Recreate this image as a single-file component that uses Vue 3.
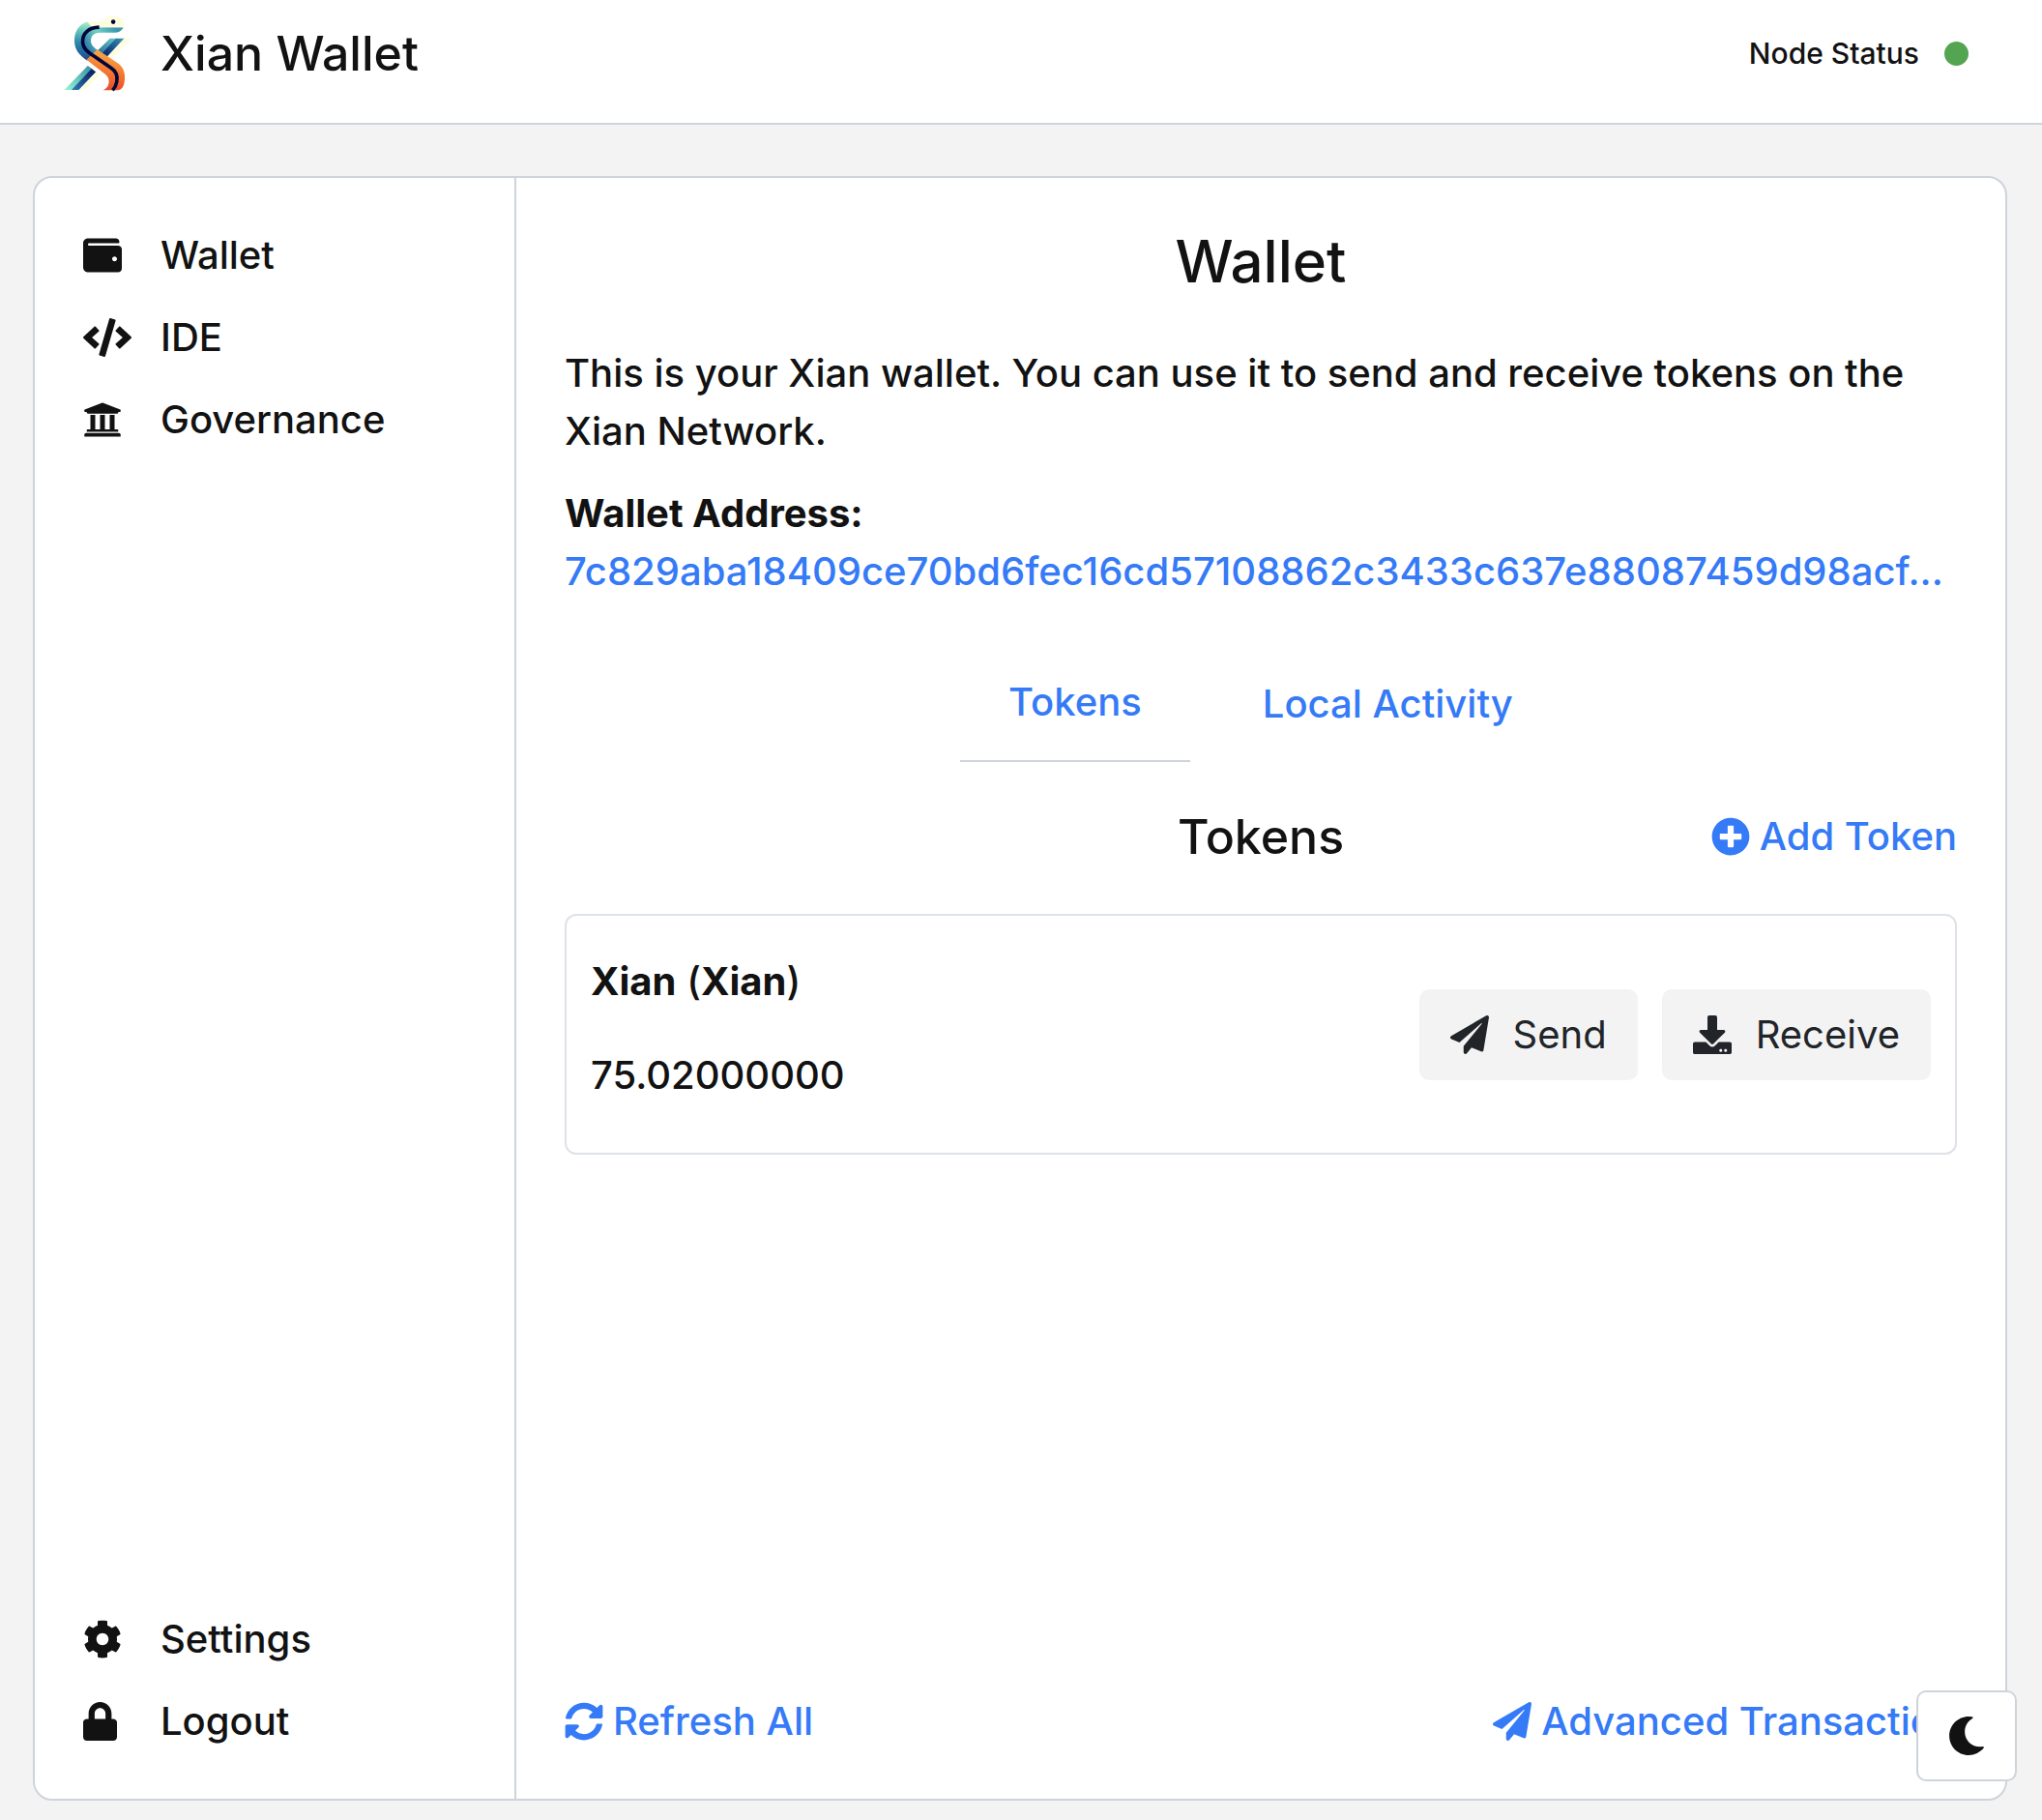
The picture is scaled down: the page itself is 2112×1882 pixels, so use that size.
<script setup>
import { ref } from 'vue'

const icons = {
  wallet: { w: 512, d: 'M461.2 128H80c-8.84 0-16-7.16-16-16s7.16-16 16-16h384c8.84 0 16-7.16 16-16 0-26.51-21.49-48-48-48H64C28.65 32 0 60.65 0 96v320c0 35.35 28.65 64 64 64h397.2c28.02 0 50.8-21.53 50.8-48V176c0-26.47-22.78-48-50.8-48zM416 336c-17.67 0-32-14.33-32-32s14.33-32 32-32 32 14.33 32 32-14.33 32-32 32z' },
  code: { w: 640, d: 'M278.9 511.5l-61-17.7c-6.4-1.8-10-8.5-8.2-14.9L346.2 8.7c1.8-6.4 8.5-10 14.9-8.2l61 17.7c6.4 1.8 10 8.5 8.2 14.9L293.8 503.3c-1.9 6.4-8.5 10.1-14.9 8.2zm-114-112.2l43.5-46.4c4.6-4.9 4.3-12.7-.8-17.2L117 256l90.6-79.7c5.1-4.5 5.5-12.3.8-17.2l-43.5-46.4c-4.5-4.8-12.1-5.1-17-.5L3.8 247.2c-5.1 4.7-5.1 12.8 0 17.5l144.1 135.1c4.9 4.6 12.5 4.4 17-.5zm327.2.6l144.1-135.1c5.1-4.7 5.1-12.8 0-17.5L492.1 112.1c-4.8-4.5-12.4-4.3-17 .5L431.6 159c-4.6 4.9-4.3 12.7.8 17.2L523 256l-90.6 79.7c-5.1 4.5-5.5 12.3-.8 17.2l43.5 46.4c4.5 4.9 12.1 5.1 17 .6z' },
  bank: { w: 512, d: 'M496 128v16a8 8 0 0 1-8 8h-24v12c0 6.627-5.373 12-12 12H60c-6.627 0-12-5.373-12-12v-12H24a8 8 0 0 1-8-8v-16a8 8 0 0 1 4.941-7.392l232-88a7.996 7.996 0 0 1 6.118 0l232 88A8 8 0 0 1 496 128zm-24 304H40c-13.255 0-24 10.745-24 24v16a8 8 0 0 0 8 8h464a8 8 0 0 0 8-8v-16c0-13.255-10.745-24-24-24zM96 192v192H60c-6.627 0-12 5.373-12 12v20h416v-20c0-6.627-5.373-12-12-12h-36V192h-64v192h-64V192h-64v192h-64V192H96z' },
  cog: { w: 512, d: 'M487.4 315.7l-42.6-24.6c4.3-23.2 4.3-47 0-70.2l42.6-24.6c4.9-2.8 7.1-8.6 5.5-14-11.1-35.6-30-67.8-54.7-94.6-3.8-4.1-10-5.1-14.8-2.3L380.8 110c-17.9-15.4-38.5-27.3-60.8-35.1V25.8c0-5.6-3.9-10.5-9.4-11.7-36.7-8.2-74.3-7.8-109.2 0-5.5 1.2-9.4 6.1-9.4 11.7V75c-22.2 7.9-42.8 19.8-60.8 35.1L88.7 85.5c-4.9-2.8-11-1.9-14.8 2.3-24.7 26.7-43.6 58.9-54.7 94.6-1.7 5.4.6 11.2 5.5 14L67.3 221c-4.3 23.2-4.3 47 0 70.2l-42.6 24.6c-4.9 2.8-7.1 8.6-5.5 14 11.1 35.6 30 67.8 54.7 94.6 3.8 4.1 10 5.1 14.8 2.3l42.6-24.6c17.9 15.4 38.5 27.3 60.8 35.1v49.2c0 5.6 3.9 10.5 9.4 11.7 36.7 8.2 74.3 7.8 109.2 0 5.5-1.2 9.4-6.1 9.4-11.7v-49.2c22.2-7.9 42.8-19.8 60.8-35.1l42.6 24.6c4.9 2.8 11 1.9 14.8-2.3 24.7-26.7 43.6-58.9 54.7-94.6 1.5-5.5-.7-11.3-5.6-14.1zM256 336c-44.1 0-80-35.9-80-80s35.9-80 80-80 80 35.9 80 80-35.9 80-80 80z' },
  lock: { w: 448, d: 'M400 224h-24v-72C376 68.2 307.8 0 224 0S72 68.2 72 152v72H48c-26.5 0-48 21.5-48 48v192c0 26.5 21.5 48 48 48h352c26.5 0 48-21.5 48-48V272c0-26.5-21.5-48-48-48zm-104 0H152v-72c0-39.7 32.3-72 72-72s72 32.3 72 72v72z' },
  plus: { w: 512, d: 'M256 8C119 8 8 119 8 256s111 248 248 248 248-111 248-248S393 8 256 8zm144 276c0 6.6-5.4 12-12 12h-92v92c0 6.6-5.4 12-12 12h-56c-6.6 0-12-5.4-12-12v-92h-92c-6.6 0-12-5.4-12-12v-56c0-6.6 5.4-12 12-12h92v-92c0-6.6 5.4-12 12-12h56c6.6 0 12 5.4 12 12v92h92c6.6 0 12 5.4 12 12v56z' },
  plane: { w: 512, d: 'M476 3.2L12.5 270.6c-18.1 10.4-15.8 35.6 2.2 43.2L121 358.4l287.3-253.2c5.5-4.9 13.3 2.6 8.6 8.3L176 407v80.5c0 23.6 28.5 32.9 42.5 15.8L282 426l124.6 52.2c14.2 6 30.4-2.9 33-18.2l72-432C515 7.8 493.3-6.8 476 3.2z' },
  download: { w: 512, d: 'M216 0h80c13.3 0 24 10.7 24 24v168h87.7c17.8 0 26.7 21.5 14.1 34.1L269.7 378.3c-7.5 7.5-19.8 7.5-27.3 0L90.1 226.1c-12.6-12.6-3.7-34.1 14.1-34.1H192V24c0-13.3 10.7-24 24-24zm296 376v112c0 13.3-10.7 24-24 24H24c-13.3 0-24-10.7-24-24V376c0-13.3 10.7-24 24-24h146.7l49 49c20.1 20.1 52.5 20.1 72.6 0l49-49H488c13.3 0 24 10.7 24 24zm-124 88c0-11-9-20-20-20s-20 9-20 20 9 20 20 20 20-9 20-20zm64 0c0-11-9-20-20-20s-20 9-20 20 9 20 20 20 20-9 20-20z' },
  sync: { w: 512, d: 'M370.72 133.28C339.458 104.008 298.888 87.962 255.848 88c-77.458.068-144.328 53.178-162.791 126.85-1.344 5.363-6.122 9.15-11.651 9.15H24.103c-7.498 0-13.194-6.807-11.807-14.176C33.933 94.924 134.813 8 256 8c66.448 0 126.791 26.136 171.315 68.685L463.03 40.97C478.149 25.851 504 36.559 504 57.941V192c0 13.255-10.745 24-24 24H345.941c-21.382 0-32.09-25.851-16.971-40.971l41.75-41.749zM32 296h134.059c21.382 0 32.09 25.851 16.971 40.971l-41.75 41.75c31.262 29.273 71.835 45.319 114.876 45.28 77.418-.07 144.315-53.144 162.787-126.849 1.344-5.363 6.122-9.15 11.651-9.15h57.304c7.498 0 13.194 6.807 11.807 14.176C478.067 417.076 377.187 504 256 504c-66.448 0-126.791-26.136-171.315-68.685L48.97 471.03C33.851 486.149 8 475.441 8 454.059V320c0-13.255 10.745-24 24-24z' },
  moon: { w: 512, d: 'M283.211 512c78.962 0 151.079-35.925 198.857-94.792 7.068-8.708-.639-21.43-11.562-19.35-124.203 23.654-238.262-71.576-238.262-196.954 0-72.222 38.662-138.635 101.498-174.394 9.686-5.512 7.25-20.197-3.756-22.23A258.156 258.156 0 0 0 283.211 0c-141.309 0-256 114.511-256 256 0 141.309 114.511 256 256 256z' },
}

const mainLinks = [
  { label: 'Wallet', icon: icons.wallet },
  { label: 'IDE', icon: icons.code },
  { label: 'Governance', icon: icons.bank },
]
const accountLinks = [
  { label: 'Settings', icon: icons.cog },
  { label: 'Logout', icon: icons.lock },
]

const tabs = ['Tokens', 'Local Activity']
const activeTab = ref('Tokens')

const address = '7c829aba18409ce70bd6fec16cd57108862c3433c637e88087459d98acf...'
const tokens = [{ name: 'Xian', symbol: 'Xian', balance: '75.02000000' }]
</script>

<template>
  <div class="page">
    <header class="topbar">
      <div class="brand">
        <svg class="logo" viewBox="75 45 216 243" aria-hidden="true">
          <defs>
            <linearGradient id="ribbon" gradientUnits="userSpaceOnUse" x1="90" y1="280" x2="180" y2="200">
              <stop offset="0" stop-color="#8df0cf" />
              <stop offset="1" stop-color="#2a7f9e" />
            </linearGradient>
            <linearGradient id="ribbonTop" gradientUnits="userSpaceOnUse" x1="190" y1="165" x2="250" y2="115">
              <stop offset="0" stop-color="#2d76a0" />
              <stop offset="1" stop-color="#74d8c8" />
            </linearGradient>
            <linearGradient id="navy" gradientUnits="userSpaceOnUse" x1="110" y1="280" x2="260" y2="120">
              <stop offset="0" stop-color="#2c74ac" />
              <stop offset="0.35" stop-color="#0a2668" />
              <stop offset="0.7" stop-color="#0d3478" />
              <stop offset="1" stop-color="#3a8fb4" />
            </linearGradient>
            <linearGradient id="neck" gradientUnits="userSpaceOnUse" x1="150" y1="60" x2="135" y2="185">
              <stop offset="0" stop-color="#c9f8d3" />
              <stop offset="0.25" stop-color="#6fd0bd" />
              <stop offset="0.6" stop-color="#2f88ad" />
              <stop offset="1" stop-color="#1d4c8c" />
            </linearGradient>
            <linearGradient id="jaw" gradientUnits="userSpaceOnUse" x1="150" y1="150" x2="240" y2="90">
              <stop offset="0" stop-color="#2f7fa8" />
              <stop offset="0.5" stop-color="#6fd2c2" />
              <stop offset="1" stop-color="#3e97ad" />
            </linearGradient>
            <linearGradient id="tail" gradientUnits="userSpaceOnUse" x1="230" y1="175" x2="205" y2="280">
              <stop offset="0" stop-color="#f7a145" />
              <stop offset="0.5" stop-color="#f2762f" />
              <stop offset="1" stop-color="#e84a2a" />
            </linearGradient>
          </defs>
          <path fill="url(#ribbonTop)" d="M222 120H242L198 170L183 158Z" />
          <path fill="url(#navy)" d="M240 120H268L212 182L196 168Z" />
          <path fill="#fffde0" d="M266 120H290L224 188L210 180Z" />
          <path fill="url(#ribbon)" d="M78 282L152 206L166 216L102 282Z" />
          <path fill="url(#navy)" d="M101 282L164 215L178 226L124 282Z" />
          <path fill="#fffde0" d="M124 282L177 226L190 233L145 282Z" />
          <path fill="url(#neck)" d="M262 86H170C142 90 132 110 136 134C139 150 155 163 168 172L150 190C125 172 110 155 110 126C110 92 132 66 164 66H200L266 76Z" />
          <path fill="#fffde0" d="M150 68C165 64 180 68 193 66C205 62 213 48 233 48C254 48 267 61 267 78C267 83 266 85 263 86H166Z" />
          <path fill="url(#jaw)" d="M170 86H264C258 97 249 102 236 102H190C171 103 160 112 162 132C164 143 173 150 183 157L170 173C140 157 133 140 137 116C141 99 152 90 170 86Z" />
          <path fill="url(#tail)" d="M182 155L245 197C263 209 270 227 268 250C266 270 260 282 245 283H199C212 279 220 266 218 251C217 241 210 234 200 227L148 187Z" />
          <path fill="none" stroke="#03053a" stroke-width="11" d="M188 85C155 86 134 104 136 133C138 158 160 167 178 180L225 213C242 224 246 240 243 256C241 268 238 274 230 283" />
          <circle cx="232" cy="68" r="7" fill="#03053a" />
        </svg>
        <span class="brand-name">Xian Wallet</span>
      </div>
      <div class="status">
        <span>Node Status</span>
        <span class="dot"></span>
      </div>
    </header>

    <div class="card">
      <nav class="sidebar">
        <ul v-for="(group, g) in [mainLinks, accountLinks]" :key="g">
          <li v-for="link in group" :key="link.label">
            <a class="nav-link" href="#">
              <span class="nav-icon">
                <svg class="icon" :viewBox="`0 0 ${link.icon.w} 512`" aria-hidden="true"><path :d="link.icon.d" /></svg>
              </span>
              {{ link.label }}
            </a>
          </li>
        </ul>
      </nav>

      <main class="content">
        <h1>Wallet</h1>
        <p class="intro">This is your Xian wallet. You can use it to send and receive tokens on the Xian Network.</p>
        <div class="address">
          <strong>Wallet Address:</strong>
          <a href="#">{{ address }}</a>
        </div>

        <div class="tabs" role="tablist">
          <button
            v-for="tab in tabs"
            :key="tab"
            type="button"
            role="tab"
            class="tab"
            :class="{ active: tab === activeTab }"
            :aria-selected="tab === activeTab"
            @click="activeTab = tab"
          >{{ tab }}</button>
        </div>

        <div class="section-head">
          <h2>Tokens</h2>
          <a class="action" href="#">
            <svg class="icon" viewBox="0 0 512 512" aria-hidden="true"><path :d="icons.plus.d" /></svg>
            Add Token
          </a>
        </div>

        <article v-for="token in tokens" :key="token.name" class="token">
          <div class="token-info">
            <h3><strong>{{ token.name }}</strong> (<strong>{{ token.symbol }}</strong>)</h3>
            <p>{{ token.balance }}</p>
          </div>
          <div class="token-actions">
            <button type="button" class="btn">
              <svg class="icon" viewBox="0 0 512 512" aria-hidden="true"><path :d="icons.plane.d" /></svg>
              Send
            </button>
            <button type="button" class="btn">
              <svg class="icon" viewBox="0 0 512 512" aria-hidden="true"><path :d="icons.download.d" /></svg>
              Receive
            </button>
          </div>
        </article>

        <footer class="content-foot">
          <a class="action" href="#">
            <svg class="icon" viewBox="0 0 512 512" aria-hidden="true"><path :d="icons.sync.d" /></svg>
            Refresh All
          </a>
          <a class="action" href="#">
            <svg class="icon" viewBox="0 0 512 512" aria-hidden="true"><path :d="icons.plane.d" /></svg>
            Advanced Transaction
          </a>
        </footer>
      </main>
    </div>

    <button type="button" class="theme-toggle" aria-label="Toggle dark mode">
      <svg class="icon" viewBox="0 0 512 512" aria-hidden="true"><path :d="icons.moon.d" /></svg>
    </button>
  </div>
</template>

<style>
body {
  margin: 0;
  background: #f3f3f3;
}
</style>

<style scoped>
.page {
  box-sizing: border-box;
  display: flex;
  flex-direction: column;
  min-height: 100vh;
  font: 500 40px/60px Inter, "Liberation Sans", sans-serif;
  color: #121212;
  background: #f3f3f3;
}
h1, h2, h3, p, ul {
  margin: 0;
  padding: 0;
  font-size: inherit;
  font-weight: inherit;
}
ul {
  list-style: none;
}
a {
  color: #357af6;
  text-decoration: none;
}
button {
  font: inherit;
  cursor: pointer;
}
.icon {
  display: block;
  flex: none;
  height: 40px;
  fill: currentColor;
}

.topbar {
  display: flex;
  justify-content: space-between;
  align-items: center;
  padding: 15px 76px 32px 65px;
  background: #fff;
  border-bottom: 2px solid #ced4da;
}
.brand {
  display: flex;
  align-items: center;
  gap: 29px;
}
.logo {
  display: block;
  width: 72px;
  height: 80px;
}
.brand-name {
  font-size: 50px;
}
.status {
  display: flex;
  align-items: center;
  gap: 26px;
  font-size: 30px;
}
.dot {
  width: 25px;
  height: 25px;
  border-radius: 50%;
  background: #54a552;
}

.card {
  flex: 1;
  display: flex;
  margin: 53px 36px 20px 34px;
  background: #fff;
  border: 2px solid #ced4da;
  border-radius: 20px;
}
.sidebar {
  flex: none;
  box-sizing: border-box;
  width: 498px;
  display: flex;
  flex-direction: column;
  justify-content: space-between;
  padding: 50px;
  border-right: 2px solid #ced4da;
}
.sidebar ul {
  display: flex;
  flex-direction: column;
  gap: 25px;
}
.nav-link {
  display: flex;
  align-items: center;
  color: inherit;
}
.nav-icon {
  width: 80px;
}

.content {
  flex: 1;
  min-width: 0;
  display: flex;
  flex-direction: column;
  padding: 50px;
}
h1 {
  font-size: 60px;
  line-height: 72px;
  text-align: center;
}
.intro {
  margin-top: 50px;
}
.address {
  margin-top: 25px;
}
.address strong,
.address a {
  display: block;
  overflow: hidden;
  text-overflow: ellipsis;
  white-space: nowrap;
}
.tabs {
  display: flex;
  justify-content: center;
  align-items: flex-end;
  gap: 25px;
  margin-top: 45px;
}
.tab {
  padding: 30px 50px;
  border: 0;
  background: none;
  color: #357af6;
}
.tab.active {
  border-bottom: 2px solid #ced4da;
}
.section-head {
  display: grid;
  grid-template-columns: 1fr auto 1fr;
  align-items: center;
  margin-top: 47px;
}
h2 {
  grid-column: 2;
  font-size: 50px;
}
.action {
  display: flex;
  align-items: center;
  gap: 10px;
}
.section-head .action {
  justify-self: end;
}
.token {
  display: flex;
  justify-content: space-between;
  align-items: center;
  margin-top: 50px;
  padding: 38px 25px 50px;
  border: 2px solid #dee2e6;
  border-radius: 12px;
}
.token-info {
  display: flex;
  flex-direction: column;
  gap: 37px;
}
.token-actions {
  display: flex;
  gap: 25px;
  /* keeps the buttons centred on the card despite its uneven padding */
  margin-top: 12px;
}
.btn {
  display: flex;
  align-items: center;
  gap: 25px;
  padding: 17px 32px;
  border: 0;
  border-radius: 10px;
  background: #f3f3f3;
  color: #212529;
  font-weight: 400;
}
.content-foot {
  display: flex;
  justify-content: space-between;
  margin-top: auto;
}

.theme-toggle {
  position: fixed;
  right: 26px;
  bottom: 40px;
  padding: 25px 30px;
  border: 2px solid #ced4da;
  border-radius: 10px;
  background: #fff;
  color: #121212;
}
</style>
